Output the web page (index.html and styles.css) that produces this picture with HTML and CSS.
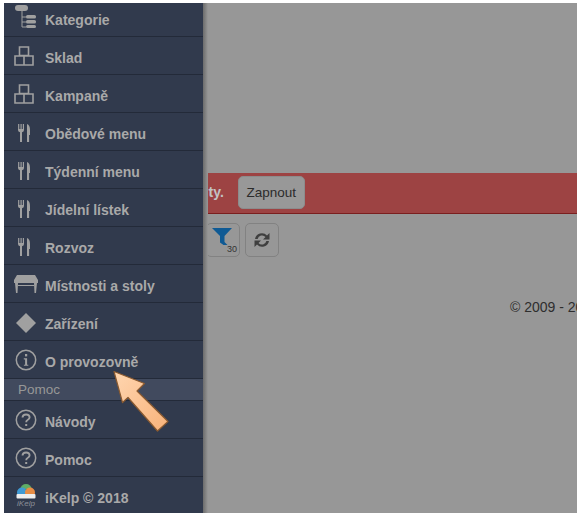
FILE: index.html
```html
<!DOCTYPE html>
<html lang="cs">
<head>
<meta charset="utf-8">
<title>iKelp</title>
<link rel="stylesheet" href="styles.css">
</head>
<body>
<svg class="defs" width="0" height="0" aria-hidden="true">
  <symbol id="boxes" viewBox="0 0 20 20"><path d="M5.500 1h9v8.500h-9zM1 10h9v9H1zM10 10h9v9h-9z" fill="none" stroke="currentColor" stroke-width="1.600"/></symbol>
  <symbol id="fork" viewBox="0 0 12 18"><path d="M0 0h.9v5h.8V0h.8v5h.8V0h.8v5h.8V0H6v6q0 1.800-2 2.300V18H2V8.300Q0 7.800 0 6z" fill="currentColor"/><path d="M9 0q3 1 3 6v5h-.9v7H9z" fill="currentColor"/></symbol>
  <symbol id="help" viewBox="0 0 22 22"><circle cx="11" cy="11" r="9.700" fill="none" stroke="currentColor" stroke-width="1.500"/><path d="M7.500 8.500q.2-3 3.600-3 3.500 0 3.500 2.800 0 1.700-2 2.700-1.400.7-1.400 2.200" fill="none" stroke="currentColor" stroke-width="1.900"/><rect x="10.200" y="15" width="2" height="2" fill="currentColor"/></symbol>
</svg>
<div class="frame">
  <nav class="sidebar">
    <a class="item"><span class="slot"><svg class="ico-tree" viewBox="0 0 22 23"><rect x="0" y="0" width="13" height="6" rx="3" fill="currentColor"/><path d="M7 6v16h4M7 12h4M7 17h4" fill="none" stroke="currentColor" stroke-width="1"/><rect x="11" y="10" width="10" height="3.500" rx="1.500" fill="currentColor"/><rect x="11" y="15" width="10" height="3.500" rx="1.500" fill="currentColor"/><rect x="11" y="20" width="10" height="3" rx="1.500" fill="currentColor"/></svg></span><span class="label">Kategorie</span></a>
    <a class="item"><span class="slot"><svg class="ico-box"><use href="#boxes"/></svg></span><span class="label">Sklad</span></a>
    <a class="item"><span class="slot"><svg class="ico-box"><use href="#boxes"/></svg></span><span class="label">Kampaně</span></a>
    <a class="item"><span class="slot"><svg class="ico-fork"><use href="#fork"/></svg></span><span class="label">Obědové menu</span></a>
    <a class="item"><span class="slot"><svg class="ico-fork"><use href="#fork"/></svg></span><span class="label">Týdenní menu</span></a>
    <a class="item"><span class="slot"><svg class="ico-fork"><use href="#fork"/></svg></span><span class="label">Jídelní lístek</span></a>
    <a class="item"><span class="slot"><svg class="ico-fork"><use href="#fork"/></svg></span><span class="label">Rozvoz</span></a>
    <a class="item"><span class="slot"><svg class="ico-table" viewBox="0 0 24 18"><path d="M3 0h18l3 5v3H0V5z" fill="currentColor"/><path d="M1 8h3l-.5 10H2zM20 8h3l-1 10h-1.500z" fill="currentColor"/><path d="M4 10h16v1H4z" fill="currentColor"/></svg></span><span class="label">Místnosti a stoly</span></a>
    <a class="item"><span class="slot"><svg class="ico-diamond" viewBox="0 0 20 20"><path d="M10 0l10 10-10 10L0 10z" fill="currentColor"/></svg></span><span class="label">Zařízení</span></a>
    <a class="item"><span class="slot"><svg class="ico-help" viewBox="0 0 22 22"><circle cx="11" cy="11" r="9.700" fill="none" stroke="currentColor" stroke-width="1.500"/><rect x="10" y="5" width="2.200" height="2.400" fill="currentColor"/><path d="M8.800 9.300h3.300v6.400h1.200v1.100H8.900v-1.100h1.200v-5.300H8.800z" fill="currentColor"/></svg></span><span class="label">O provozovně</span></a>
    <div class="section">Pomoc</div>
    <a class="item"><span class="slot"><svg class="ico-help"><use href="#help"/></svg></span><span class="label">Návody</span></a>
    <a class="item"><span class="slot"><svg class="ico-help"><use href="#help"/></svg></span><span class="label">Pomoc</span></a>
    <a class="item item-last"><span class="slot"><span class="logo"><svg class="ico-logo" viewBox="0 0 20 15"><path d="M4.500 5a5.500 5 0 0 1 11 0z" fill="#5fae66"/><circle cx="6" cy="8.500" r="5" fill="#3f9ad4"/><circle cx="14" cy="8.500" r="5" fill="#e88d45"/><rect x="0.500" y="10" width="19" height="4.500" rx="1" fill="#eeeeee"/></svg><i class="logo-text">iKelp</i></span></span><span class="label">iKelp © 2018</span></a>
  </nav>
  <main class="content">
    <div class="banner"><strong class="banner-text">uty.</strong><button class="btn-on">Zapnout</button></div>
    <div class="tools">
      <button class="tool"><svg class="ico-filter" viewBox="0 0 20 18"><path d="M0 0h20l-7.500 8v6l3 3h-4l-3.500-2.500V8z" fill="#0f5a94"/></svg><span class="badge">30</span></button>
      <button class="tool"><svg class="ico-sync" viewBox="0 0 20 18"><path d="M3 8a7 7 0 0 1 12-3.500L17.500 2v6.500H11l2.500-2.500A4.600 4.600 0 0 0 5.600 8z" fill="#3f3f3f"/><path d="M17 10a7 7 0 0 1-12 3.500L2.500 16V9.500H9L6.500 12a4.600 4.600 0 0 0 7.900-2z" fill="#3f3f3f"/></svg></button>
    </div>
    <p class="copy">© 2009 - 2018</p>
  </main>
  <div class="shadow"></div>
  <svg class="arrow" viewBox="0 0 60 64" width="60" height="64"><defs><linearGradient id="g" x1="0" y1="0" x2="1" y2="1"><stop offset="0" stop-color="#ffd6b0"/><stop offset="1" stop-color="#f8b27a"/></linearGradient></defs><path d="M2 1.500L32.500 13.500 25 21 56 51.500 45.500 61 16 27.500 10.500 32.500z" fill="url(#g)" stroke="#8a5a30" stroke-width="1.200" stroke-linejoin="round"/></svg>
</div>
</body>
</html>
```
FILE: styles.css
```css
html, body { margin: 0; padding: 0; background: #fff; }
body { padding: 3px 4px 6px 4px; font-family: "Liberation Sans", Arial, sans-serif; }
.defs { position: absolute; }
.frame { position: relative; display: flex; width: 573px; height: 510px; overflow: hidden; background: #979797; }
.sidebar { flex: 0 0 199px; display: flex; flex-direction: column; background: #313a4d; margin-top: -4px; height: 516px; overflow: hidden; }
.item { display: flex; align-items: center; flex: 0 0 38px; box-sizing: border-box; border-bottom: 1px solid #232a39; color: #a0a0a0; }
.item-last { border-bottom: 0; }
.slot { flex: 0 0 41px; display: flex; justify-content: flex-start; align-items: center; position: relative; height: 100%; }
.label { font-size: 14px; font-weight: 700; color: #a9a9a9; padding-top: 4px; white-space: nowrap; }
.section { flex: 0 0 22px; box-sizing: border-box; padding: 2px 0 0 14px; font-size: 13.500px; line-height: 17px; color: #979797; background: #414a5e; border-bottom: 1px solid #232a39; }
.ico-tree { width: 22px; height: 23px; margin: -3px 0 0 11px; }
.ico-box { width: 20px; height: 20px; margin: 0 0 0 10px; }
.ico-fork { width: 12px; height: 18px; margin: 3px 0 0 14px; }
.ico-table { width: 24px; height: 18px; margin-left: 10px; }
.ico-diamond { width: 20px; height: 20px; margin: 2px 0 0 12px; }
.ico-help { width: 22px; height: 22px; margin-left: 11px; }
.logo { display: flex; flex-direction: column; align-items: center; margin: 0 0 0 11px; width: 22px; }
.ico-logo { width: 20px; height: 15px; }
.logo-text { font-size: 8px; line-height: 9px; color: #8d9099; font-family: "Liberation Sans", sans-serif; }
.content { flex: 1; min-width: 0; overflow: hidden; color: #2e2e2e; }
.banner { display: flex; align-items: center; margin-top: 170px; height: 41px; box-sizing: border-box; background: #9d4343; border-bottom: 1px solid #7a1f1f; padding: 0 0 2px 0; }
.banner-text { font-size: 14px; color: #c3c3c3; margin-left: -3px; }
.btn-on { margin-left: 14px; width: 67px; height: 33px; padding: 0; border: 1px solid #8c8c8c; border-radius: 5px; background: #989898; font: 13.500px "Liberation Sans", sans-serif; color: #2b2b2b; }
.tools { display: flex; gap: 5px; margin: 9px 0 0 3px; }
.tool { position: relative; width: 34px; height: 34px; padding: 0; border: 1px solid #828282; border-radius: 5px; background: #979797; }
.ico-filter { position: absolute; left: 5px; top: 4px; width: 20px; height: 18px; }
.badge { position: absolute; right: 2px; bottom: 2px; font-size: 9px; color: #333; line-height: 9px; }
.ico-sync { width: 20px; height: 18px; display: block; margin: 0 auto; }
.copy { margin: 42px 0 0 307px; font-size: 14px; line-height: 16px; white-space: nowrap; color: #2e2e2e; }
.shadow { position: absolute; left: 199px; top: 0; width: 5px; height: 100%; background: linear-gradient(to right, #6c6c6c, #979797); }
.arrow { position: absolute; left: 108px; top: 367px; }
```
